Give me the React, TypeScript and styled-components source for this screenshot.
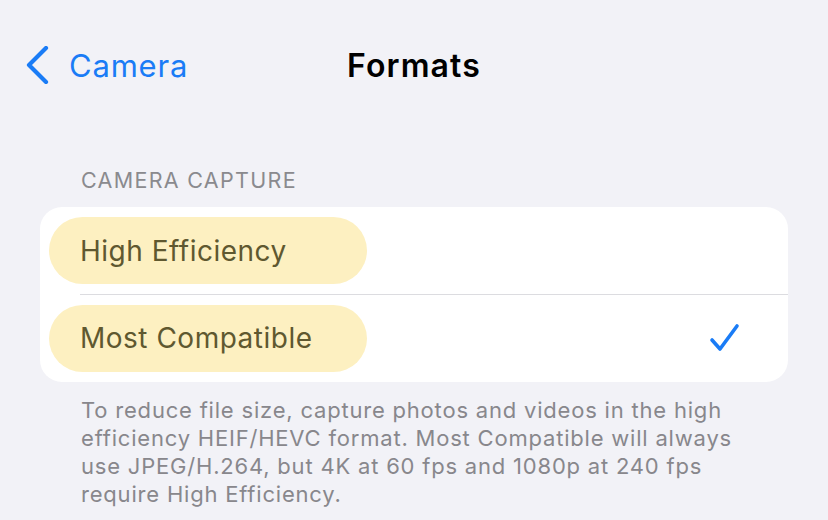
import React from "react";
import styled, { createGlobalStyle } from "styled-components";

const Global = createGlobalStyle`
  html, body { margin: 0; padding: 0; background: #f2f2f7; }
  body { font-family: Inter, "Noto Sans", "Liberation Sans", sans-serif; -webkit-font-smoothing: antialiased; }
`;

const Page = styled.div`
  width: 828px;
  height: 520px;
  overflow: hidden;
  background: #f2f2f7;
`;

const Nav = styled.div`
  height: 130px;
  display: grid;
  grid-template-columns: 1fr auto 1fr;
  align-items: center;
`;

const Back = styled.div`
  display: flex;
  align-items: center;
  gap: 20px;
  padding-left: 25px;
  color: #1a7cf6;
  font-size: 31px;
  font-weight: 400;
  letter-spacing: 0.8px;
`;

const Title = styled.div`
  font-size: 32px;
  font-weight: 600;
  color: #000;
  letter-spacing: 1.1px;
`;

const Section = styled.div`
  padding: 0 40px;
`;

const Header = styled.div`
  margin: 37px 0 14px 41px;
  font-size: 21.5px;
  line-height: 26px;
  color: #8a8a8e;
  letter-spacing: 1.3px;
`;

const Card = styled.div`
  background: #fff;
  border-radius: 22px;
  overflow: hidden;
`;

const Row = styled.div<{ $divider?: boolean }>`
  position: relative;
  height: 87.5px;
  display: flex;
  align-items: center;
  justify-content: space-between;
  padding: 0 47px 0 9px;
  box-sizing: border-box;
  ${(p) =>
    p.$divider
      ? `&::after { content: ""; position: absolute; left: 40px; right: 0; bottom: 0; height: 1px; background: #dcdce0; }`
      : ""}
`;

const Pill = styled.div`
  width: 318px;
  height: 67px;
  border-radius: 34px;
  background: #fdf0c1;
  display: flex;
  align-items: center;
  padding-left: 31px;
  box-sizing: border-box;
  font-size: 28px;
  color: #5f5830;
  letter-spacing: 0.5px;
`;

const Footer = styled.div`
  margin: 14px 41px 0 41px;
  font-size: 22px;
  line-height: 28px;
  color: #88878c;
  letter-spacing: 0.8px;
`;

const Chevron = () => (
  <svg width="24" height="38" viewBox="0 0 24 38">
    <path d="M21 2 L4 19 L21 36" fill="none" stroke="#1a7cf6" strokeWidth="4.2" strokeLinecap="round" strokeLinejoin="round" />
  </svg>
);

const Check = () => (
  <svg width="32" height="30" viewBox="0 0 32 30">
    <path d="M3 17 L11 26 L28 3" fill="none" stroke="#1a7cf6" strokeWidth="3.6" strokeLinecap="round" strokeLinejoin="round" />
  </svg>
);

export default function App() {
  return (
    <Page>
      <Global />
      <Nav>
        <Back>
          <Chevron />
          <span>Camera</span>
        </Back>
        <Title>Formats</Title>
        <div />
      </Nav>
      <Section>
        <Header>CAMERA CAPTURE</Header>
        <Card>
          <Row $divider>
            <Pill>High Efficiency</Pill>
          </Row>
          <Row>
            <Pill>Most Compatible</Pill>
            <Check />
          </Row>
        </Card>
        <Footer>
          To reduce file size, capture photos and videos in the high efficiency HEIF/HEVC format. Most Compatible will always use JPEG/H.264, but 4K at 60 fps and 1080p at 240 fps require High Efficiency.
        </Footer>
      </Section>
    </Page>
  );
}
